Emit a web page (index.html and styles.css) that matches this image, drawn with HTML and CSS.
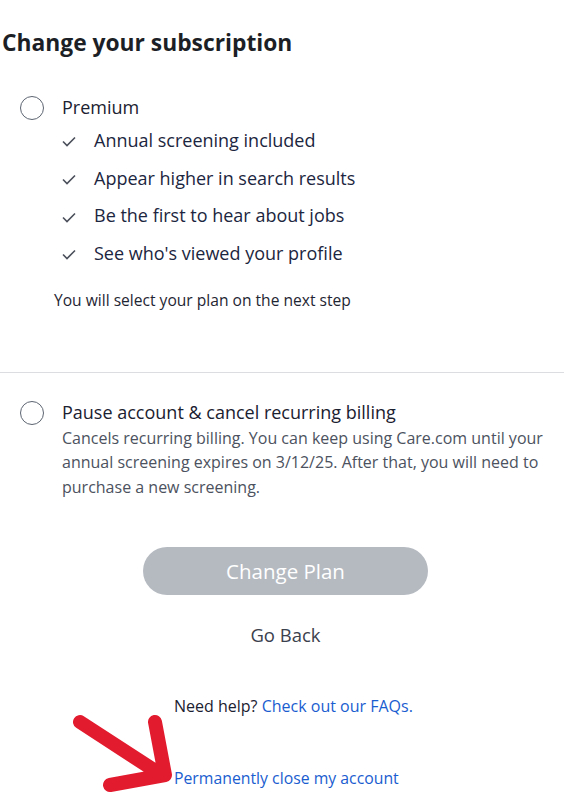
FILE: index.html
```html
<!DOCTYPE html>
<html lang="en">
<head>
  <meta charset="UTF-8">
  <meta name="viewport" content="width=device-width, initial-scale=1.0">
  <title>Change your subscription</title>
  <link rel="stylesheet" href="styles.css">
</head>
<body>
  <main class="page">
    <h1 class="title">Change your subscription</h1>

    <section class="option">
      <span class="radio"></span>
      <div class="option-body">
        <div class="option-label">Premium</div>
        <ul class="perks">
          <li><svg class="check" viewBox="0 0 14 11"><path d="M1 5.5 L5 9.5 L13 1.5"/></svg>Annual screening included</li>
          <li><svg class="check" viewBox="0 0 14 11"><path d="M1 5.5 L5 9.5 L13 1.5"/></svg>Appear higher in search results</li>
          <li><svg class="check" viewBox="0 0 14 11"><path d="M1 5.5 L5 9.5 L13 1.5"/></svg>Be the first to hear about jobs</li>
          <li><svg class="check" viewBox="0 0 14 11"><path d="M1 5.5 L5 9.5 L13 1.5"/></svg>See who's viewed your profile</li>
        </ul>
        <p class="note">You will select your plan on the next step</p>
      </div>
    </section>

    <hr class="divider">

    <section class="option">
      <span class="radio"></span>
      <div class="option-body">
        <div class="option-label">Pause account &amp; cancel recurring billing</div>
        <p class="desc">Cancels recurring billing. You can keep using Care.com until your annual screening expires on 3/12/25. After that, you will need to purchase a new screening.</p>
      </div>
    </section>

    <div class="actions">
      <button class="btn-primary" disabled>Change Plan</button>
      <a class="go-back" href="#">Go Back</a>
    </div>

    <div class="footer">
      <p class="help">Need help? <a href="#">Check out our FAQs.</a></p>
      <a class="close-link" href="#">Permanently close my account</a>
    </div>

    <!-- annotation arrow drawn over the page -->
    <svg class="arrow" viewBox="0 0 120 90">
      <path d="M10 12 L90 64 M85 12 L95 65 L40 75"/>
    </svg>
  </main>
</body>
</html>
```

FILE: styles.css
```css
body {
  margin: 0;
  font-family: "Open Sans", Lato, sans-serif;
  color: #1b2130;
  background: #fff;
}
.page {
  position: relative;
  width: 564px;
  height: 798px;
  overflow: hidden;
  padding-top: 29px;
  box-sizing: border-box;
}
.title {
  margin: 0 0 38px 2px;
  font-size: 22.8px;
  line-height: 28px;
  font-weight: 700;
  color: #1d1f26;
}
.option {
  display: flex;
  align-items: flex-start;
  gap: 18px;
  padding-left: 20px;
}
.radio {
  flex: none;
  width: 22px;
  height: 22px;
  margin-top: 1px;
  border: 1.6px solid #5d6571;
  border-radius: 50%;
}
.option-body {
  padding-right: 14px;
}
.option-label {
  font-size: 18px;
  line-height: 24px;
  color: #1b2130;
}
.perks {
  list-style: none;
  margin: 3px 0 0;
  padding: 0;
}
.perks li {
  display: flex;
  align-items: center;
  line-height: 37.7px;
  font-size: 18px;
  font-weight: 500;
  color: #1c2640;
}
.check {
  width: 14px;
  height: 11px;
  margin: 2px 18px 0 0;
  fill: none;
  stroke: #4a4f5a;
  stroke-width: 1.6;
}
.note {
  margin: 16px 0 0 -8px;
  font-size: 15.6px;
  line-height: 22px;
  color: #1f2633;
}
.divider {
  margin: 61px 0 27px;
  border: none;
  border-top: 1px solid #dcdde0;
}
.desc {
  margin: 2px 0 0;
  font-size: 16px;
  line-height: 24.5px;
  color: #4c5260;
}
.actions {
  display: flex;
  flex-direction: column;
  align-items: center;
  padding-left: 7px;
  margin-top: 48px;
}
.btn-primary {
  width: 285px;
  height: 48px;
  border: none;
  border-radius: 24px;
  background: #b5bac1;
  color: #fff;
  font-family: inherit;
  font-size: 20.5px;
}
.go-back {
  margin-top: 28px;
  font-size: 18.5px;
  line-height: 24px;
  color: #3b414d;
  text-decoration: none;
}
.footer {
  padding-left: 174px;
  margin-top: 48px;
}
.help {
  margin: 0;
  font-size: 16px;
  line-height: 22px;
  color: #1b2130;
}
.help a,
.close-link {
  color: #1a5dd0;
  text-decoration: none;
}
.close-link {
  display: block;
  margin-top: 50px;
  font-size: 15.8px;
  line-height: 22px;
}
.arrow {
  position: absolute;
  left: 70px;
  top: 710px;
  width: 120px;
  height: 90px;
  fill: none;
  stroke: #e31b2f;
  stroke-width: 14;
  stroke-linecap: round;
  stroke-linejoin: round;
}
```
